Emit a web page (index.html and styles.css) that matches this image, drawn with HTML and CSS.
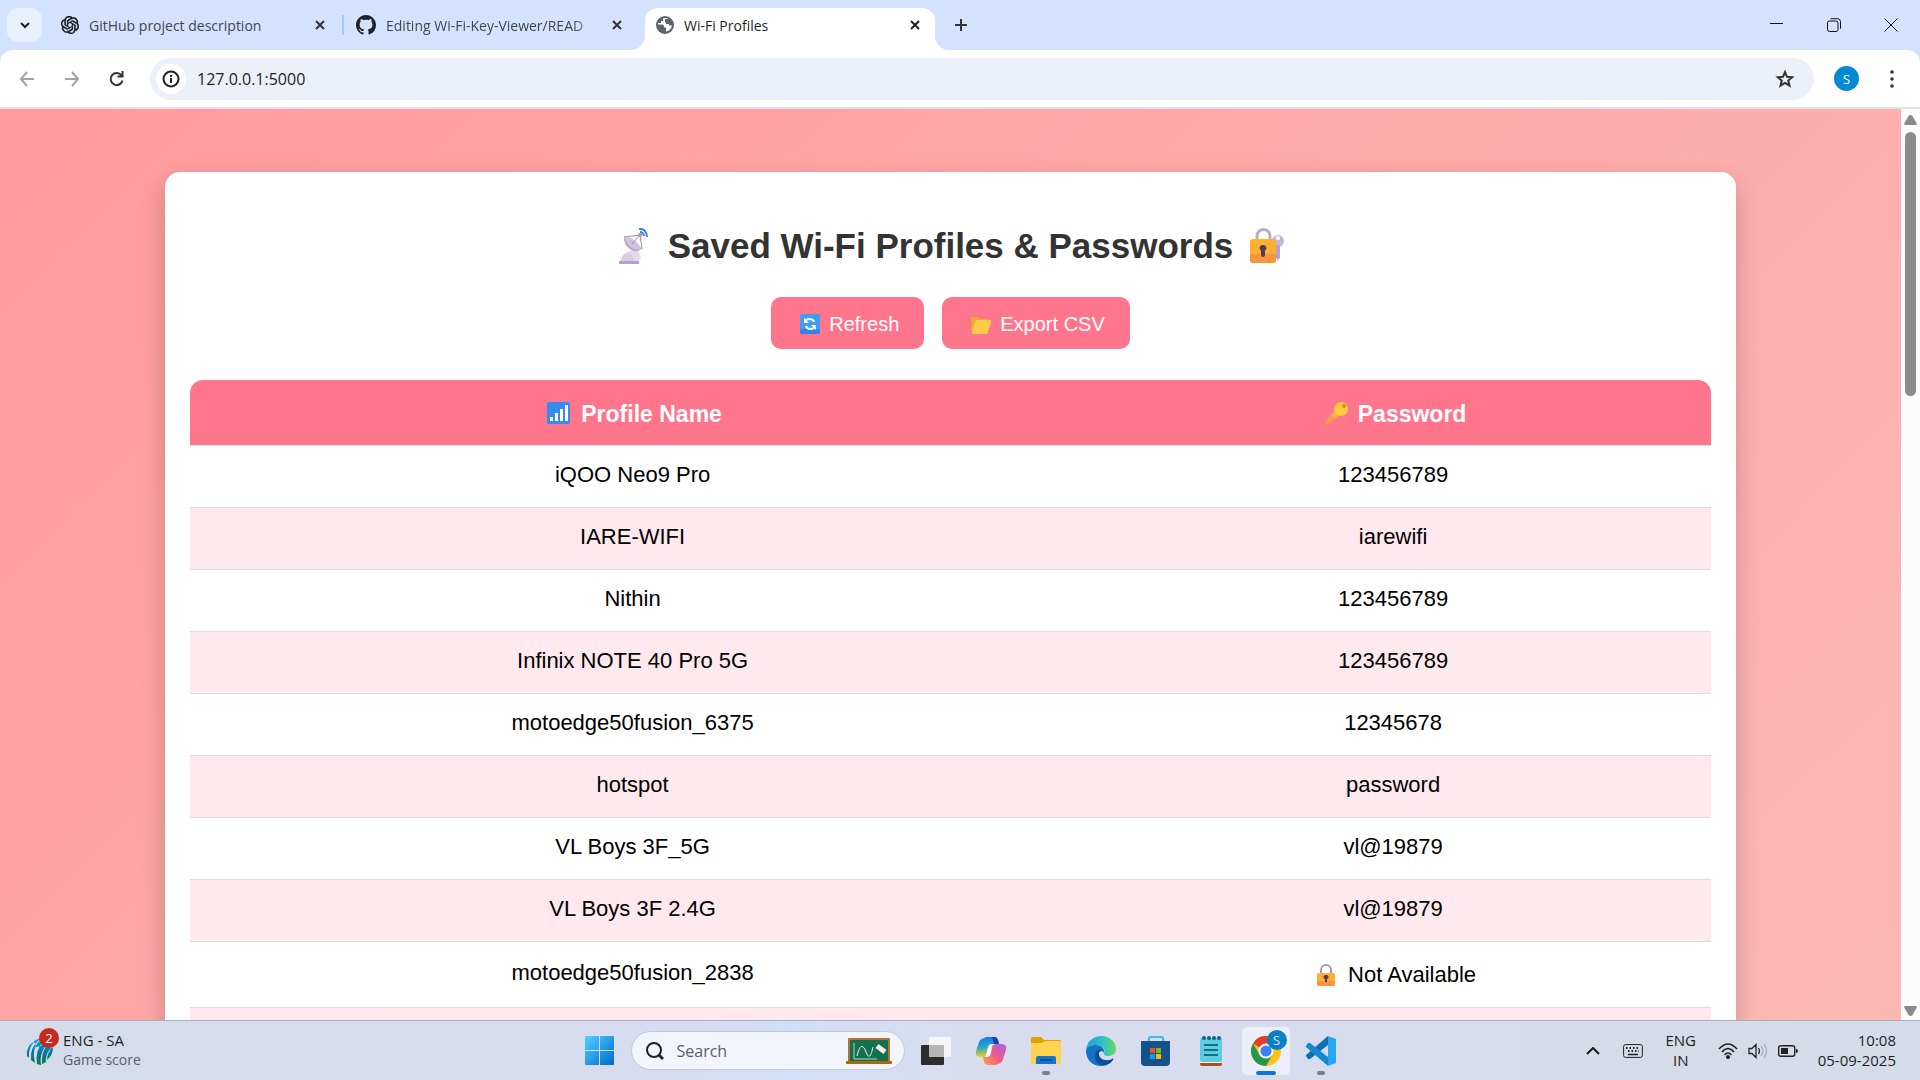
FILE: index.html
```html
<!DOCTYPE html>
<html lang="en">
<head>
<meta charset="utf-8">
<meta name="viewport" content="width=device-width, initial-scale=1">
<title>Wi-Fi Profiles</title>
<link rel="stylesheet" href="styles.css">
</head>
<body>
<div class="desktop">
  <header class="browser">
    <div class="tabstrip">
      <button class="tab-search" aria-label="Search tabs"><svg width="12" height="12" viewBox="0 0 12 12" fill="none" stroke="#1f1f1f" stroke-width="2"><path d="M2 4l4 4 4-4"/></svg></button>
      <div class="tab">
        <svg class="favicon" viewBox="0 0 24 24" fill="#111"><path stroke="#111" stroke-width=".5" d="M22.28 9.82a5.98 5.98 0 0 0-.52-4.91 6.05 6.05 0 0 0-6.51-2.9A6.07 6.07 0 0 0 4.98 4.18a5.98 5.98 0 0 0-4 2.9 6.05 6.05 0 0 0 .74 7.1 5.98 5.98 0 0 0 .51 4.91 6.05 6.05 0 0 0 6.51 2.9A5.98 5.98 0 0 0 13.26 24a6.06 6.06 0 0 0 5.77-4.21 5.99 5.99 0 0 0 4-2.9 6.06 6.06 0 0 0-.75-7.07zM13.26 22.43a4.48 4.48 0 0 1-2.88-1.04l.14-.08 4.78-2.76a.8.8 0 0 0 .39-.68v-6.74l2.02 1.17a.07.07 0 0 1 .04.05v5.58a4.5 4.5 0 0 1-4.49 4.5zM3.6 18.3a4.47 4.47 0 0 1-.54-3.01l.14.08 4.78 2.76a.77.77 0 0 0 .78 0l5.84-3.37v2.33a.08.08 0 0 1-.03.06L9.74 19.95a4.5 4.5 0 0 1-6.14-1.65zM2.34 7.9a4.49 4.49 0 0 1 2.37-1.98V11.6a.77.77 0 0 0 .39.68l5.81 3.35-2.02 1.17a.08.08 0 0 1-.07 0l-4.83-2.79A4.5 4.5 0 0 1 2.34 7.87zm16.6 3.85l-5.84-3.39L15.12 7.2a.08.08 0 0 1 .07 0l4.83 2.79a4.49 4.49 0 0 1-.68 8.1v-5.67a.79.79 0 0 0-.4-.67zm2.01-3.02l-.14-.09-4.77-2.78a.78.78 0 0 0-.79 0L9.41 9.23V6.9a.07.07 0 0 1 .03-.06l4.83-2.79a4.5 4.5 0 0 1 6.68 4.66zM8.31 12.86l-2.02-1.16a.08.08 0 0 1-.04-.06V6.07a4.5 4.5 0 0 1 7.38-3.45l-.14.08-4.78 2.76a.8.8 0 0 0-.4.68zm1.1-2.36l2.6-1.5 2.6 1.5v3l-2.6 1.5-2.6-1.5z"/></svg>
        <span class="tab-title">GitHub project description</span>
        <button class="icon-btn" aria-label="Close tab"><svg width="10" height="10" viewBox="0 0 10 10" stroke="#333" stroke-width="2"><path d="M1 1l8 8M9 1l-8 8"/></svg></button>
      </div>
      <span class="tab-divider"></span>
      <div class="tab tab-fade">
        <svg class="favicon favicon-large" viewBox="0 0 16 16" fill="#1f2328"><path d="M8 0C3.58 0 0 3.58 0 8c0 3.54 2.29 6.53 5.47 7.59.4.07.55-.17.55-.38 0-.19-.01-.82-.01-1.49-2.01.37-2.53-.49-2.69-.94-.09-.23-.48-.94-.82-1.13-.28-.15-.68-.52-.01-.53.63-.01 1.08.58 1.23.82.72 1.21 1.87.87 2.33.66.07-.52.28-.87.51-1.07-1.78-.2-3.64-.89-3.64-3.95 0-.87.31-1.59.82-2.15-.08-.2-.36-1.02.08-2.12 0 0 .67-.21 2.2.82.64-.18 1.32-.27 2-.27s1.36.09 2 .27c1.53-1.04 2.2-.82 2.2-.82.44 1.1.16 1.92.08 2.12.51.56.82 1.27.82 2.15 0 3.07-1.87 3.75-3.65 3.95.29.25.54.73.54 1.48 0 1.07-.01 1.93-.01 2.2 0 .21.15.46.55.38A8.01 8.01 0 0 0 16 8c0-4.42-3.58-8-8-8z"/></svg>
        <span class="tab-title">Editing Wi-Fi-Key-Viewer/READ</span>
        <button class="icon-btn" aria-label="Close tab"><svg width="10" height="10" viewBox="0 0 10 10" stroke="#333" stroke-width="2"><path d="M1 1l8 8M9 1l-8 8"/></svg></button>
      </div>
      <div class="tab tab-active">
        <svg class="favicon" viewBox="0 0 18 18"><circle cx="9" cy="9" r="9" fill="#5f6368"/><path d="M2 8.500h4q2 0 2 2v1h2v4q5-1 6-6h-3V8h-3V6h2V2.500Q9 1.500 7 2.500V5H5v2H2z" fill="#fff"/><path d="M9 3h3v3h3v2h-4l-2-2z" fill="#5f6368"/></svg>
        <span class="tab-title">Wi-Fi Profiles</span>
        <button class="icon-btn" aria-label="Close tab"><svg width="10" height="10" viewBox="0 0 10 10" stroke="#1f1f1f" stroke-width="2"><path d="M1 1l8 8M9 1l-8 8"/></svg></button>
      </div>
      <button class="icon-btn new-tab" aria-label="New tab"><svg width="14" height="14" viewBox="0 0 14 14" stroke="#333" stroke-width="2"><path d="M7 1v12M1 7h12"/></svg></button>
      <div class="window-controls">
        <button class="icon-btn" aria-label="Minimize"><svg width="14" height="14" viewBox="0 0 14 14" stroke="#111"><path d="M0 5.500h13"/></svg></button>
        <button class="icon-btn" aria-label="Restore"><svg width="14" height="14" viewBox="0 0 14 14" fill="none" stroke="#111"><rect x=".5" y="3" width="10.500" height="10.500" rx="2"/><path d="M3.500.700h7a3 3 0 0 1 3 3v7"/></svg></button>
        <button class="icon-btn" aria-label="Close"><svg width="14" height="14" viewBox="0 0 14 14" stroke="#111"><path d="M.5.5l13 13M13.500.5l-13 13"/></svg></button>
      </div>
    </div>
    <div class="toolbar">
      <button class="icon-btn" aria-label="Back"><svg width="16" height="16" viewBox="0 0 16 16" fill="none" stroke="#a3a3a3" stroke-width="2"><path d="M8 1L2 8l6 7M2 8h13"/></svg></button>
      <button class="icon-btn" aria-label="Forward"><svg width="16" height="16" viewBox="0 0 16 16" fill="none" stroke="#a3a3a3" stroke-width="2"><path d="M8 1l6 7-6 7M14 8H1"/></svg></button>
      <button class="icon-btn" aria-label="Reload"><svg width="16" height="16" viewBox="0 0 16 16" fill="none" stroke="#333" stroke-width="2"><path d="M13.500 9.500A6 6 0 1 1 12.500 4.500M13.500 0v5.500H8.500"/></svg></button>
      <div class="omnibox">
        <button class="site-info" aria-label="View site information"><svg width="18" height="18" viewBox="0 0 18 18" fill="none" stroke="#222" stroke-width="2"><circle cx="9" cy="9" r="7.500"/><path d="M9 8v5M9 5v2"/></svg></button>
        <input class="address" type="text" value="127.0.0.1:5000" aria-label="Address bar">
        <button class="icon-btn" aria-label="Bookmark this tab"><svg width="20" height="20" viewBox="0 0 20 20" fill="none" stroke="#333" stroke-width="2"><path d="M10 3l2 4.800 5.200.400-4 3.400 1.300 5.100L10 14l-4.500 2.700 1.300-5.100-4-3.400 5.200-.400z"/></svg></button>
      </div>
      <button class="avatar" aria-label="Profile">S</button>
      <button class="icon-btn menu-dots" aria-label="Menu"><svg width="4" height="18" viewBox="0 0 4 18" fill="#333"><circle cx="2" cy="2" r="1.800"/><circle cx="2" cy="9" r="1.800"/><circle cx="2" cy="16" r="1.800"/></svg></button>
    </div>
  </header>

  <div class="viewport">
    <main class="page">
      <section class="card">
        <h1>
          <svg class="emoji" viewBox="0 0 48 36"><path d="M19 23l9-2 3 9-3 3H18z" fill="#e2dbe8"/><path d="M11 31q3-7 9-7l5 9v2H10z" fill="#d9cce3"/><path d="M9 33h20q1 3-1 3H9z" fill="#b9a0c9"/><path d="M14 9c-1 9 9 18 18 12z" fill="#b8a5c9"/><path d="M14 9q10-1 18 12Q19 24 14 9z" fill="#cfc2dc"/><path d="M14 9L30 7l2 14M30 7l-8 9" fill="none" stroke="#9a8da5"/><circle cx="30" cy="7" r="2" fill="#a79ab4"/><path d="M30 4q3 0 4 4M29 1q7-1 8 8" fill="none" stroke="#3f7fea" stroke-width="2"/></svg>
          <span>Saved Wi-Fi Profiles &amp; Passwords</span>
          <svg class="emoji" viewBox="0 0 48 36"><path d="M14 13V8a6.500 6.500 0 0 1 13 0v5" fill="none" stroke="#b9afc4" stroke-width="3"/><circle cx="35" cy="13" r="6" fill="#c8b5da"/><path d="M33 17h4v13l-2 2-2-2z" fill="#b9a1cc"/><circle cx="35" cy="10" r="2" fill="#fff"/><rect x="7" y="11" width="26" height="24" rx="3" fill="#ffb02e"/><path d="M7 26h26v6q0 3-3 3H10q-3 0-3-3z" fill="#f98648" opacity=".65"/><path d="M20 17a3 3 0 0 1 2 5.500V27q0 2-2 2t-2-2v-4.500A3 3 0 0 1 20 17z" fill="#51395c"/></svg>
        </h1>
        <div class="actions">
          <button class="action"><svg class="emoji" viewBox="0 0 28 20"><rect x="4" width="20" height="20" rx="2" fill="#3f9cf5"/><path d="M4 15h20v3q0 2-2 2H6q-2 0-2-2z" fill="#3483e8"/><path d="M9 8c1-4 8-4 9 0M19 12c-1 4-8 4-9 0" fill="none" stroke="#fff" stroke-width="2"/><path d="M8 4v5h5zM20 16v-5h-5z" fill="#fff"/></svg><span>Refresh</span></button>
          <button class="action"><svg class="emoji" viewBox="0 0 28 20"><path d="M4 4q0-1 1-1h6l2 2h8q1 0 1 2v10H5q-1 0-1-1z" fill="#f5a638"/><path d="M8 8q1-2 3-2h12q2 0 1 2l-3 10q0 2-2 2H6q-2 0-1-2z" fill="#ffcb4b"/></svg><span>Export CSV</span></button>
        </div>
        <table>
          <colgroup><col class="col-name"><col></colgroup>
          <thead>
            <tr>
              <th scope="col"><svg class="emoji" viewBox="0 0 32 24"><rect x="4" y="1" width="23" height="22" rx="2" fill="#378bee"/><path d="M7 16h3v4H7zM12 12h3v8h-3zM17 8h3v12h-3zM22 4h3v16h-3z" fill="#fff"/></svg><span>Profile Name</span></th>
              <th scope="col"><svg class="emoji" viewBox="0 0 32 24"><path d="M15 10l4 4-10 9q-3 1-4-1l1-3z" fill="#f59a4b"/><path d="M15 10l4 4-4 4-4-4z" fill="#fbb044"/><circle cx="21" cy="8" r="7" fill="#ffc83d"/><circle cx="24" cy="5" r="2" fill="#d88a3a"/></svg><span>Password</span></th>
            </tr>
          </thead>
          <tbody>
            <tr><td>iQOO Neo9 Pro</td><td>123456789</td></tr>
            <tr><td>IARE-WIFI</td><td>iarewifi</td></tr>
            <tr><td>Nithin</td><td>123456789</td></tr>
            <tr><td>Infinix NOTE 40 Pro 5G</td><td>123456789</td></tr>
            <tr><td>motoedge50fusion_6375</td><td>12345678</td></tr>
            <tr><td>hotspot</td><td>password</td></tr>
            <tr><td>VL Boys 3F_5G</td><td>vl@19879</td></tr>
            <tr><td>VL Boys 3F 2.4G</td><td>vl@19879</td></tr>
            <tr class="row-locked"><td>motoedge50fusion_2838</td><td class="locked"><svg class="emoji" viewBox="0 0 32 24"><path d="M11 12V7a5 5 0 0 1 10 0v5" fill="none" stroke="#a99bb5" stroke-width="2"/><rect x="7" y="10" width="18" height="13" rx="2" fill="#ffb02e"/><path d="M7 18h18v3q0 2-2 2H9q-2 0-2-2z" fill="#f98648" opacity=".65"/><path d="M16 12a2 2 0 0 1 1 4v3h-2v-3a2 2 0 0 1 1-4z" fill="#51395c"/></svg><span>Not Available</span></td></tr>
            <tr><td></td><td></td></tr>
          </tbody>
        </table>
      </section>
    </main>
    <div class="scrollbar" aria-hidden="true">
      <svg width="13" height="10" viewBox="0 0 13 10" fill="#8b8b8b"><path d="M6.500 0q1 0 2 1l4 7q1 2-1 2h-10q-2 0-1-2l4-7q1-1 2-1z"/></svg>
      <span class="thumb"></span>
      <svg width="13" height="10" viewBox="0 0 13 10" fill="#8b8b8b"><path d="M6.500 10q1 0 2-1l4-7q1-2-1-2h-10q-2 0-1 2l4 7q1 1 2 1z"/></svg>
    </div>
  </div>

  <footer class="taskbar">
    <div class="widget">
      <div class="widget-icon">
        <svg width="28" height="28" viewBox="0 0 28 28"><defs><linearGradient id="ball" x1="0" y1="0" x2="0" y2="1"><stop offset="0" stop-color="#0ea5e8"/><stop offset=".5" stop-color="#0878a8"/><stop offset="1" stop-color="#0a7a4c"/></linearGradient></defs><path d="M7 5Q0 10 1 19l2 2Q2 11 8 5zM13 3Q4 10 5 23l4 3Q5 12 14 3zM16 6q-7 8-5 21l4 1q-2-10 5-20zM21 8q-6 8-5 19l4-2q-1-7 5-14zM26 10q-5 7-5 13 6-5 6-12zM8 4q6-4 12-2l-5 7-5 1z" fill="url(#ball)"/></svg>
        <span class="count">2</span>
      </div>
      <div class="widget-text"><span>ENG - SA</span><span class="muted">Game score</span></div>
    </div>
    <nav class="apps" aria-label="Taskbar">
      <button class="app" aria-label="Start"><svg width="29" height="29" viewBox="0 0 29 29"><defs><linearGradient id="win" x1="0" y1="0" x2="1" y2="1"><stop offset="0" stop-color="#4fd3ff"/><stop offset="1" stop-color="#0068cc"/></linearGradient></defs><path d="M1 0h13v14H0V1q0-1 1-1zM15 0h13q1 0 1 1v13H15zM0 15h14v14H1q-1 0-1-1zM15 15h14v13q0 1-1 1H15z" fill="url(#win)"/></svg></button>
      <label class="search">
        <svg width="18" height="18" viewBox="0 0 18 18" fill="none" stroke="#222" stroke-width="2"><circle cx="8" cy="8" r="7"/><path d="M13 13l4 4" stroke-width="3"/></svg>
        <input type="text" placeholder="Search" aria-label="Search">
        <svg width="46" height="28" viewBox="0 0 46 28"><rect x="2" y="1" width="42" height="25" rx="1" fill="#b5703c"/><rect x="4" y="3" width="38" height="21" fill="#15704f"/><rect y="24" width="46" height="3" rx="1" fill="#a96813"/><path d="M8 6v16h23" fill="none" stroke="#a8dcc9"/><path d="M11 19c3-12 6-12 9-4s5 4 7-5" fill="none" stroke="#eef" stroke-width="1"/><path d="M31 9l8 6" stroke="#eee" stroke-width="5"/></svg>
      </label>
      <button class="app" aria-label="Task view"><svg width="30" height="30" viewBox="0 0 30 30"><rect y="9" width="23" height="20" rx="1" fill="#2c2c2c"/><rect x="8" y="1" width="22" height="20" rx="1" fill="#f5f5f5"/><path d="M8 9h15v12H8z" fill="#b7b7b7"/></svg></button>
      <button class="app" aria-label="Copilot"><svg width="30" height="28" viewBox="0 0 30 28"><defs><linearGradient id="cpa" x1="0" y1="0" x2="0" y2="1"><stop offset="0" stop-color="#1a7fe0"/><stop offset=".5" stop-color="#26a5c8"/><stop offset="1" stop-color="#f2cf1e"/></linearGradient><linearGradient id="cpb" x1="1" y1="0" x2="0" y2="1"><stop offset="0" stop-color="#a864e8"/><stop offset=".5" stop-color="#f0588a"/><stop offset="1" stop-color="#ffa24a"/></linearGradient></defs><path d="M8 1q1-1 3-1h8q2 0 3 3l1 4h-4q-2 0-3 3l-2 6q-1 4-4 4H4q-5 0-4-6l3-9q1-3 5-4z" fill="url(#cpa)"/><path d="M16 0h3q2 0 3 3l1 4h-5z" fill="#1c3fb4"/><path d="M22 27q-1 1-3 1h-8q-2 0-3-3l-1-5h4q2 0 3-3l2-6q1-4 4-4h6q5 0 4 6l-3 9q-1 4-5 5z" fill="url(#cpb)"/><path d="M16 9q1-2 3-2h-4q-2 0-3 3l-2 8q0 2-2 2h3q3 0 4-4z" fill="#fff"/></svg></button>
      <button class="app app-running" aria-label="File Explorer"><svg width="30" height="27" viewBox="0 0 30 27"><path d="M0 2q0-2 2-2h8l3 3h15q2 0 2 2v6H0z" fill="#e0a008"/><path d="M0 6h11l3-2h14q2 0 2 2v19q0 2-2 2H2q-2 0-2-2z" fill="#ffd34d"/><path d="M5 27v-6q0-2 2-2h16q2 0 2 2v6z" fill="#1176ce"/><path d="M9 23h12" stroke="#0a4b91" stroke-width="2"/></svg></button>
      <button class="app" aria-label="Edge"><svg width="30" height="30" viewBox="0 0 30 30"><defs><linearGradient id="edt"><stop offset="0" stop-color="#189edb"/><stop offset=".6" stop-color="#35c5c0"/><stop offset="1" stop-color="#66dc52"/></linearGradient></defs><path d="M0 14C1 5 8 0 15 0c9 0 15 6 15 13 0 5-4 7-8 7-3 0-5-1-4-3 2-3-1-8-7-8C5 9 1 11 0 14z" fill="url(#edt)"/><path d="M0 15c0-4 5-6 10-6 7 0 9 5 8 8-1-3-6-2-6 2 0 6 7 10 14 6-3 4-7 5-11 5C7 30 0 24 0 15z" fill="#1273c8"/><path d="M10 16c-3 7 1 14 9 13 4-1 7-3 8-5 1-1 0-2-1-1-6 3-13 0-13-5 0-3 2-4 3-4-3-1-5 0-6 2z" fill="#0c4f97"/></svg></button>
      <button class="app" aria-label="Microsoft Store"><svg width="30" height="30" viewBox="0 0 30 30"><path d="M8 6V3q0-2 2-2h10q2 0 2 2v3" fill="none" stroke="#35bdf2" stroke-width="2"/><path d="M0 5h29v21q0 4-4 4H4q-4 0-4-4z" fill="#15518b"/><path fill="#f25022" d="M9 12h5v5H9z"/><path fill="#7fba00" d="M15 12h5v5h-5z"/><path fill="#00a4ef" d="M9 18h5v5H9z"/><path fill="#ffb900" d="M15 18h5v5h-5z"/></svg></button>
      <button class="app" aria-label="Notepad"><svg width="22" height="30" viewBox="0 0 22 30"><path d="M0 26h22v2q0 2-2 2H2q-2 0-2-2z" fill="#a65217"/><path d="M0 25h22v2H0z" fill="#eee"/><path d="M2 2h18q2 0 2 2v20q0 2-2 2H2q-2 0-2-2V4q0-2 2-2z" fill="#5fcbe0"/><path d="M4 9h14M4 14h14M4 19h14" stroke="#10718f" stroke-width="2"/><g fill="#0f6380"><circle cx="4" cy="2" r="2"/><circle cx="9" cy="2" r="2"/><circle cx="14" cy="2" r="2"/><circle cx="19" cy="2" r="2"/></g></svg></button>
      <button class="app app-current" aria-label="Chrome"><svg width="30" height="30" viewBox="0 0 30 30"><circle cx="15" cy="15" r="15" fill="#fbc116"/><path d="M15 15L2 7.500A15 15 0 0 1 28 7.500H15z" fill="#e33b2e"/><path d="M2 7.500A15 15 0 0 0 15 30l6.500-11.500L15 15 8.500 18.700z" fill="#279847"/><circle cx="15" cy="15" r="7.500" fill="#fff"/><circle cx="15" cy="15" r="5.600" fill="#3b7ff0"/></svg><span class="app-badge">S</span></button>
      <button class="app app-running" aria-label="Visual Studio Code"><svg width="30" height="30" viewBox="0 0 30 30"><path d="M22 0l8 3v24l-8 3z" fill="#28a6f2"/><path d="M22 0v9L4 23l-2 0-2-3v-1z" fill="#0d6fb5"/><path d="M22 30v-9L4 7H2l-2 3v1z" fill="#1488d2"/></svg></button>
    </nav>
    <div class="tray">
      <button class="icon-btn" aria-label="Show hidden icons"><svg width="14" height="8" viewBox="0 0 14 8" fill="none" stroke="#1b1b1b" stroke-width="2"><path d="M1 7l6-6 6 6"/></svg></button>
      <button class="icon-btn" aria-label="Touch keyboard"><svg width="20" height="14" viewBox="0 0 20 14" fill="none" stroke="#222"><rect x=".6" y=".6" width="18.800" height="12.800" rx="2"/><path d="M3 4h14M5 7h11" stroke-width="2" stroke-dasharray="1.500 2"/><path d="M5 10.500h10" stroke-width="1.500"/></svg></button>
      <div class="lang"><span>ENG</span><span>IN</span></div>
      <div class="status">
        <svg width="20" height="16" viewBox="0 0 20 16" fill="none" stroke="#222" stroke-width="1.500"><path d="M1 6q9-10 18 0M4 9q6-7 12 0M6.500 11.700q3.500-3.500 7 0"/><circle cx="10" cy="14" r="1.300" fill="#222"/></svg>
        <svg width="20" height="16" viewBox="0 0 20 16" fill="none" stroke="#222" stroke-width="1.300"><path d="M1 5.500h3l4-4v13l-4-4H1zM10.500 5q2 3 0 6"/><path d="M13 3q4 5 0 10M16 1q5 7 0 14" stroke="#a9adb8"/></svg>
        <svg width="20" height="12" viewBox="0 0 20 12"><rect x=".7" y=".7" width="16" height="10.600" rx="2" fill="none" stroke="#222" stroke-width="1.400"/><path d="M3 3h7v6H3zM18 4q2 0 2 2t-2 2z" fill="#222"/></svg>
      </div>
      <div class="clock"><span>10:08</span><span>05-09-2025</span></div>
    </div>
  </footer>
</div>
</body>
</html>
```
FILE: styles.css
```css
* { box-sizing: border-box; }
body { margin: 0; font-family: "Open Sans", "Noto Sans", sans-serif; font-size: 14px; color: #1f1f1f; }
button, input { font: inherit; color: inherit; border: 0; background: none; padding: 0; }
svg { display: block; flex: none; }

.desktop { display: flex; flex-direction: column; height: 100vh; }

/* Browser chrome */
.browser { background: #d3e2fd; border-bottom: 2px solid #dfe1e3; flex: none; }
.tabstrip { display: flex; height: 50px; padding-left: 7px; align-items: center; }
.tab-search { display: grid; place-items: center; width: 35px; height: 34px; border-radius: 11px; background: #e9f0fe; }
.tab { display: flex; align-items: center; width: 302px; height: 42px; padding: 0 19px; color: #41464d; }
.tab-title { flex: 1; overflow: hidden; white-space: nowrap; margin-left: 10px; }
.tab-divider { width: 2px; height: 20px; margin-left: -2px; background: #a9c8fb; }
.tab-fade { width: 301px; padding: 0 23px 0 12px; }
.tab-fade .tab-title { margin-right: 14px; mask-image: linear-gradient(to left, transparent, #000 24px); }
.tab-active { position: relative; align-self: flex-end; width: 290px; padding: 0 15px 8px 11px; color: #1f1f1f; background: #fff; border-radius: 13px 13px 0 0; }
.tab-active::before, .tab-active::after { content: ""; position: absolute; bottom: 0; width: 14px; height: 14px; }
.tab-active::before { left: -14px; background: radial-gradient(circle at 0 0, transparent 14px, #fff 14px); }
.tab-active::after { right: -14px; background: radial-gradient(circle at 100% 0, transparent 14px, #fff 14px); }
.favicon { width: 18px; height: 18px; }
.favicon-large { width: 20px; height: 20px; }
.icon-btn { display: grid; place-items: center; flex: none; }
.new-tab { margin-left: 19px; }
.window-controls { display: flex; gap: 43px; margin-left: auto; padding-right: 22px; }
.toolbar { display: flex; align-items: center; height: 57px; padding: 0 26px 0 19px; background: #fff; border-radius: 13px 13px 0 0; }
.toolbar > .icon-btn { width: 16px; margin-right: 29px; }
.toolbar > .icon-btn:nth-child(3) { margin-right: 25px; }
.omnibox { display: flex; flex: 1; align-items: center; height: 42px; padding: 0 19px 0 6px; border-radius: 21px; background: #ecf0f9; }
.site-info { display: grid; place-items: center; width: 30px; height: 30px; border-radius: 50%; background: #fff; }
.address { flex: 1; margin-left: 11px; font-size: 16px; }
.avatar { width: 25px; height: 25px; margin: 0 31px 0 20px; border-radius: 50%; background: #0588d4; color: #fff; font-size: 13px; text-align: center; }
.toolbar > .menu-dots { width: 4px; margin: 0; }

/* Web page */
.viewport { display: flex; flex: 1; min-height: 0; overflow: hidden; font-family: "Liberation Sans", Arial, sans-serif; }
.page { flex: 1; padding: 63px 165px 0; background: linear-gradient(135deg, #ff9a9e, #fad0c4) 0 0 / 100% 3005px; }
.card { height: 2800px; padding: 50px 25px 25px; background: #fff; border-radius: 15px; box-shadow: 0 10px 25px rgba(0, 0, 0, .2); }
h1 { display: flex; justify-content: center; align-items: center; gap: 10px; margin: 0 0 27px; font-size: 35px; line-height: 48px; color: #333; }
h1 .emoji { width: 48px; height: 36px; }
.actions { display: flex; justify-content: center; gap: 18px; margin-bottom: 31px; }
.action { display: flex; align-items: center; gap: 5px; height: 52px; padding: 2px 25px 0; border-radius: 10px; background: #ff758c; color: #fff; font-size: 20px; }
.action .emoji { width: 28px; height: 20px; }
table { width: 100%; table-layout: fixed; border-collapse: separate; border-spacing: 0; border-radius: 13px; overflow: hidden; font-size: 22px; line-height: 26px; color: #000; }
.col-name { width: 58%; }
th, td { height: 62px; padding: 0 0 3px 3px; text-align: center; border-bottom: 1px solid #ddd; }
th { height: 66px; padding-bottom: 0; background: #ff758c; color: #fff; font-size: 23px; }
tbody tr:nth-child(even) { background: #ffe9ee; }
.row-locked td { height: 66px; }
.row-locked .locked { padding-bottom: 0; }
th .emoji, td .emoji { display: inline-block; vertical-align: middle; width: 32px; height: 24px; margin-right: 6px; }
th span, td span { vertical-align: middle; }
.scrollbar { display: flex; flex-direction: column; align-items: center; width: 19px; padding: 6px 0 4px; background: #fcfcfc; }
.thumb { width: 11px; height: 264px; margin: 7px 0 auto; border-radius: 6px; background: #8b8b8b; }

/* Taskbar */
.taskbar { display: grid; grid-template-columns: 1fr auto 1fr; align-items: center; flex: none; height: 60px; border-top: 1px solid #a9afbd; background: linear-gradient(90deg, #d5dce8, #d7dcf0 35%, #d1e0f8 41%, #d9dcee 50%, #d8dcef 70%, #d5dce8 80%); }
.widget { display: flex; align-items: center; gap: 9px; padding-left: 26px; }
.widget-icon { position: relative; }
.count { position: absolute; left: 13px; top: -9px; width: 20px; height: 20px; border-radius: 50%; background: #c42b1c; color: #fff; font-size: 13px; line-height: 20px; text-align: center; }
.widget-text, .lang, .clock { display: flex; flex-direction: column; padding-bottom: 2px; font-size: 15px; line-height: 20px; }
.muted { color: #5a5e66; font-size: 14px; }
.apps { display: flex; align-items: center; gap: 7px; }
.app { position: relative; display: grid; place-items: center; width: 48px; height: 48px; border-radius: 5px; }
.app-current { background: #eceffa; }
.app-running::after, .app-current::after { content: ""; position: absolute; bottom: 0; left: 20px; width: 8px; height: 4px; border-radius: 2px; background: #7b7e88; }
.app-current::after { left: 14px; width: 20px; background: #0a78d4; }
.app-badge { position: absolute; right: 3px; top: 3px; width: 20px; height: 20px; border-radius: 50%; background: #0a80c4; color: #d5edfa; font-size: 13px; line-height: 20px; }
.search { display: flex; align-items: center; width: 274px; height: 39px; padding: 0 12px 0 14px; border: 1px solid #c2c9e2; border-radius: 20px; background: #f3f5fc; }
.search input { flex: 1; min-width: 0; margin-left: 13px; font-size: 16px; }
.search input::placeholder { color: #5c5f66; opacity: 1; }
.tray { display: flex; align-items: center; justify-content: flex-end; padding-right: 24px; }
.tray > .icon-btn { margin-right: 23px; }
.lang { align-items: center; width: 30px; margin-right: 22px; }
.status { display: flex; align-items: center; gap: 10px; margin-right: 20px; }
.clock { align-items: flex-end; }
```
